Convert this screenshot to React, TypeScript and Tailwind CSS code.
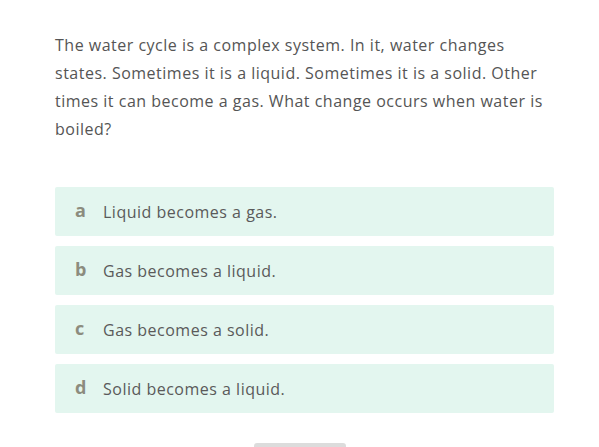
const OPTIONS = [
  { key: "a", text: "Liquid becomes a gas." },
  { key: "b", text: "Gas becomes a liquid." },
  { key: "c", text: "Gas becomes a solid." },
  { key: "d", text: "Solid becomes a liquid." },
];

export default function App() {
  return (
    <div
      className="relative h-[447px] w-[599px] overflow-hidden bg-white"
      style={{ fontFamily: '"Open Sans", "Liberation Sans", sans-serif' }}
    >
      <div className="px-[55px] pt-[31px]">
        <p className="w-[492px] text-[16px] leading-[28px] tracking-[0.5px] text-[#555]">
          The water cycle is a complex system. In it, water changes states.
          Sometimes it is a liquid. Sometimes it is a solid. Other times it can
          become a gas. What change occurs when water is boiled?
        </p>

        <div className="mt-[44px] flex w-[499px] flex-col gap-[10px]">
          {OPTIONS.map((o) => (
            <div
              key={o.key}
              className="flex h-[49px] items-center rounded-[2px] bg-[#e3f6ef] pl-[20px]"
            >
              <span className="-mt-[3px] w-[28px] text-[18px] font-bold text-[#8c8c7e]">
                {o.key}
              </span>
              <span className="text-[16px] tracking-[0.5px] text-[#5a5a5a]">
                {o.text}
              </span>
            </div>
          ))}
        </div>
      </div>

      <div className="absolute bottom-0 left-[254px] h-[4px] w-[92px] rounded-t-[3px] bg-[#dcdcdc]" />
    </div>
  );
}
